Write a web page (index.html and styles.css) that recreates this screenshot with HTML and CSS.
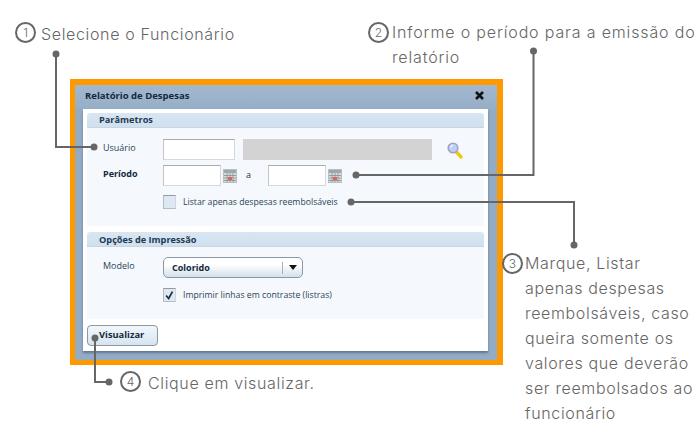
FILE: index.html
```html
<!DOCTYPE html>
<html lang="pt-BR">
<head>
  <meta charset="UTF-8" />
  <title>Relatório de Despesas</title>
  <link rel="stylesheet" href="styles.css">
</head>
<body>
  <div class="page">
    <div class="frame">
      <div class="window">
        <div class="titlebar">
          <span class="title">Relatório de Despesas</span>
          <svg class="close" width="11" height="11" viewBox="0 0 11 11"><path d="M2 2l7 7M9 2l-7 7" stroke="#111" stroke-width="2.6"/></svg>
        </div>
        <div class="content">
          <div class="panel panel-top">
            <div class="panel-head">Parâmetros</div>
            <div class="row row-user">
              <span class="lbl">Usuário</span>
              <span class="input input-user"></span>
              <span class="input-grey"></span>
              <svg class="search" width="18" height="18" viewBox="0 0 18 18">
                <path d="M10.5 11l4.5 5" stroke="#f4c80f" stroke-width="3.4" stroke-linecap="round"/>
                <circle cx="7" cy="7" r="4.8" fill="#bcd0f5" stroke="#a3a0d0" stroke-width="1.6"/>
                <path d="M4.5 6.5a3 3 0 0 1 2.5-2.5" stroke="#fff" stroke-width="1.2" fill="none"/>
              </svg>
            </div>
            <div class="row row-period">
              <span class="lbl lbl-bold">Período</span>
              <span class="input input-date"></span>
              <svg class="cal" width="14" height="14" viewBox="0 0 14 14">
                <rect x="0.5" y="0.5" width="13" height="13" fill="#d9dcdc" stroke="#b9bebe"/>
                <rect x="1" y="1" width="12" height="3" fill="#9aa9ae"/>
                <path d="M1 6.5h12M1 9h12M1 11.5h12M4 4v9M7 4v9M10 4v9" stroke="#8a9090" stroke-width="0.8"/>
                <rect x="5" y="8" width="4" height="3" fill="#e0606a"/>
              </svg>
              <span class="sep">a</span>
              <span class="input input-date"></span>
              <svg class="cal" width="14" height="14" viewBox="0 0 14 14">
                <rect x="0.5" y="0.5" width="13" height="13" fill="#d9dcdc" stroke="#b9bebe"/>
                <rect x="1" y="1" width="12" height="3" fill="#9aa9ae"/>
                <path d="M1 6.5h12M1 9h12M1 11.5h12M4 4v9M7 4v9M10 4v9" stroke="#8a9090" stroke-width="0.8"/>
                <rect x="5" y="8" width="4" height="3" fill="#e0606a"/>
              </svg>
            </div>
            <div class="row row-check">
              <span class="check"></span>
              <span class="check-label">Listar apenas despesas reembolsáveis</span>
            </div>
          </div>
          <div class="panel panel-bottom">
            <div class="panel-head">Opções de Impressão</div>
            <div class="row row-model">
              <span class="lbl">Modelo</span>
              <div class="select">
                <span class="select-text">Colorido</span>
                <span class="select-arrow"></span>
              </div>
            </div>
            <div class="row row-check2">
              <span class="check">
                <svg width="13" height="13" viewBox="0 0 13 13"><path d="M2.5 6.5l3 3.5 4.5-8" stroke="#1c2b3a" stroke-width="2" fill="none"/></svg>
              </span>
              <span class="check-label">Imprimir linhas em contraste (listras)</span>
            </div>
          </div>
          <div class="btn">Visualizar</div>
        </div>
      </div>
    </div>

    <!-- linhas das anotações -->
    <svg class="lines" width="700" height="442" viewBox="0 0 700 442">
      <g fill="none" stroke="#666" stroke-width="2">
        <path d="M56 54V147H94"/>
        <path d="M533.5 51V175H356"/>
        <path d="M351 202H574V245"/>
        <path d="M95 338V382H109"/>
      </g>
      <g fill="#666">
        <circle cx="56" cy="54" r="3.5"/><circle cx="94" cy="147" r="3.5"/>
        <circle cx="533.5" cy="51" r="3.5"/><circle cx="356" cy="175" r="3.5"/>
        <circle cx="351" cy="202" r="3.5"/><circle cx="574" cy="245" r="3.5"/>
        <circle cx="95" cy="338" r="3.5"/><circle cx="109" cy="382" r="3.5"/>
      </g>
    </svg>

    <div class="note note-1"><span class="num">1</span><span>Selecione o Funcionário</span></div>
    <div class="note note-2"><span class="num">2</span><span>Informe o período para a emissão do<br>relatório</span></div>
    <div class="note note-3"><span class="num">3</span><span>Marque, Listar<br>apenas despesas<br>reembolsáveis, caso<br>queira somente os<br>valores que deverão<br>ser reembolsados ao<br>funcionário</span></div>
    <div class="note note-4"><span class="num">4</span><span>Clique em visualizar.</span></div>
  </div>
</body>
</html>
```

FILE: styles.css
```css
body {
  margin: 0;
  background: #fff;
  font-family: "Open Sans", sans-serif;
  color: #1e3345;
}
.page {
  position: relative;
  width: 700px;
  height: 442px;
  overflow: hidden;
  padding: 79px 0 0 70px;
  box-sizing: border-box;
}
.frame {
  width: 433px;
  height: 286px;
  box-sizing: border-box;
  border: solid #ff9900;
  border-width: 6px 6px 5px 5px;
}
.window {
  height: 100%;
  background: #94abc4;
  padding: 0 9px 9px 8px;
  box-sizing: border-box;
  display: flex;
  flex-direction: column;
}
.titlebar {
  height: 24px;
  display: flex;
  align-items: center;
  justify-content: space-between;
  background: linear-gradient(#a2b8cf, #96aec7);
  margin: 0 -9px 0 -8px;
  padding: 0 12px 3px 10px;
  box-sizing: border-box;
  flex: none;
}
.title {
  font-size: 9.5px;
  font-weight: 700;
  color: #14293c;
}
.content {
  flex: 1;
  background: #fff;
  padding: 4px;
  box-shadow: 0 2px 2px #5f7893;
}
.panel {
  background: #f5f9fd;
}
.panel-top { height: 113px; margin-bottom: 6px; }
.panel-bottom { height: 87px; }
.panel-head {
  height: 14px;
  line-height: 14px;
  padding-left: 12px;
  font-size: 9.2px;
  font-weight: 700;
  color: #1e3a52;
  background: linear-gradient(#d9e6f2, #cfe0ef);
  border-bottom: 1px solid #c9d6e2;
  border-radius: 4px 4px 0 0;
}
.panel-bottom .panel-head { line-height: 16px; }
.row {
  display: flex;
  align-items: center;
  padding-left: 16px;
  font-size: 9px;
}
.row-user { margin-top: 11px; height: 21px; }
.row-period { margin-top: 5px; height: 21px; }
.row-check { margin-top: 9px; height: 14px; padding-left: 76px; }
.row-model { margin-top: 10px; height: 21px; }
.row-check2 { margin-top: 10px; height: 14px; padding-left: 76px; }
.lbl { width: 60px; flex: none; color: #2c4358; padding-bottom: 4px; }
.lbl-bold { font-weight: 700; color: #14293c; }
.input {
  background: #fff;
  border: 1px solid #d4d8dc;
  border-top-color: #aaa;
  border-left-color: #c4c4c4;
  box-sizing: border-box;
  height: 21px;
  flex: none;
}
.input-user { width: 72px; }
.input-date { width: 58px; }
.input-grey {
  width: 189px;
  height: 21px;
  margin-left: 8px;
  background: #d3d3d3;
  flex: none;
}
.search { margin-left: 14px; }
.cal { margin-left: 2px; flex: none; }
.sep { width: 31px; text-align: left; padding-left: 9px; box-sizing: border-box; padding-bottom: 2px; }
.check {
  width: 13px;
  height: 14px;
  box-sizing: border-box;
  background: #dde8f3;
  border: 1px solid #b4bcc4;
  border-right-color: #d0d6dc;
  border-top-color: #999;
  flex: none;
  display: flex;
  align-items: center;
  justify-content: center;
}
.check-label { margin-left: 7px; font-size: 8.7px; color: #2c4358; }
.select {
  width: 140px;
  height: 21px;
  box-sizing: border-box;
  border: 1px solid #8b98a5;
  border-radius: 5px;
  background: linear-gradient(#fff 35%, #d2e0ec);
  display: flex;
  align-items: center;
  justify-content: space-between;
}
.select-text { padding-left: 8px; font-weight: 700; font-size: 9px; color: #14293c; }
.select-arrow {
  width: 19px;
  height: 12px;
  border-left: 1px solid #a6b0ba;
  position: relative;
}
.select-arrow::after {
  content: "";
  position: absolute;
  left: 6px;
  top: 3px;
  border: 4px solid transparent;
  border-top: 5px solid #111;
  border-bottom: 0;
}
.btn {
  margin-top: 6px;
  width: 71px;
  height: 21px;
  line-height: 18px;
  box-sizing: border-box;
  padding-left: 11px;
  font-size: 9.3px;
  font-weight: 700;
  color: #14293c;
  border: 1px solid #8b98a5;
  border-radius: 4px;
  background: linear-gradient(#f2f7fb, #d6e4f0);
}
.lines { position: absolute; left: 0; top: 0; }
.note {
  position: absolute;
  display: flex;
  font-family: "Inter", sans-serif;
  font-size: 16px;
  font-weight: 300;
  letter-spacing: 0.65px;
  color: #666;
  line-height: 25px;
}
.note-2 { letter-spacing: 0.85px; }
.num {
  width: 21px;
  height: 21px;
  box-sizing: border-box;
  border: 2px solid #666;
  border-radius: 50%;
  flex: none;
  font-size: 12px;
  line-height: 17px;
  text-align: center;
  letter-spacing: 0;
}
.note-1 { left: 15px; top: 22px; gap: 5px; }
.note-2 { left: 368px; top: 20px; gap: 3px; }
.note-2 .num { margin-top: 2px; }
.note-3 { left: 502px; top: 251px; gap: 2px; }
.note-3 .num { margin-top: 2px; }
.note-4 { left: 120px; top: 371px; gap: 7px; }
```
